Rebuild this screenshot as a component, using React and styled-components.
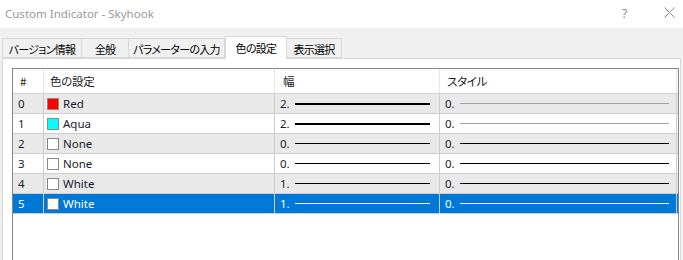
import styled, { createGlobalStyle } from 'styled-components';

const rows = [
    { id: 0, name: 'Red', swatch: '#ff0000', width: '2.', thick: 2, style: '0.', styleColor: '#a0a0a0' },
    { id: 1, name: 'Aqua', swatch: '#00ffff', width: '2.', thick: 2, style: '0.', styleColor: '#a0a0a0' },
    { id: 2, name: 'None', swatch: '#ffffff', width: '0.', thick: 1, style: '0.', styleColor: '#000000' },
    { id: 3, name: 'None', swatch: '#ffffff', width: '0.', thick: 1, style: '0.', styleColor: '#000000' },
    { id: 4, name: 'White', swatch: '#ffffff', width: '1.', thick: 1, style: '0.', styleColor: '#000000' },
    { id: 5, name: 'White', swatch: '#ffffff', width: '1.', thick: 1, style: '0.', styleColor: '#000000', selected: true },
];

const tabs = [
    { label: 'バージョン情報', width: 80 },
    { label: '全般', width: 47 },
    { label: 'パラメーターの入力', width: 96 },
    { label: '色の設定', width: 62, active: true },
    { label: '表示選択', width: 55 },
];

const columns = '31px 231px 165px 237px';

function App(){
    return(
        <Window>
            <GlobalStyle />
            <TitleBar>
                <Title>Custom Indicator - Skyhook</Title>
                <HelpButton>?</HelpButton>
                <CloseButton>
                    <svg width="11" height="11" viewBox="0 0 11 11">
                        <path d="M0.5 0.5 L10.5 10.5 M10.5 0.5 L0.5 10.5" stroke="#8c8c8c" strokeWidth="1" fill="none" />
                    </svg>
                </CloseButton>
            </TitleBar>
            <Body>
                <TabStrip>
                    {tabs.map(tab => (
                        <Tab key={tab.label} $width={tab.width} $active={tab.active}>{tab.label}</Tab>
                    ))}
                </TabStrip>
                <Panel>
                    <ListBox>
                        <HeaderRow>
                            <HeaderCell $pad={7}>#</HeaderCell>
                            <HeaderCell $pad={6}>色の設定</HeaderCell>
                            <HeaderCell $pad={8}>幅</HeaderCell>
                            <HeaderCell $pad={7}>スタイル</HeaderCell>
                        </HeaderRow>
                        {rows.map((row, i) => (
                            <Row key={row.id} $alt={i % 2 === 0} $selected={row.selected}>
                                <Cell $pad={5}>{row.id}</Cell>
                                <Cell $pad={3}>
                                    <Swatch $color={row.swatch} />
                                    <ColorName>{row.name}</ColorName>
                                </Cell>
                                <Cell $pad={5} $right={9}>
                                    {row.width}
                                    <Line $thick={row.thick} $color={row.selected ? '#ffffff' : '#000000'} />
                                </Cell>
                                <Cell $pad={5} $right={7}>
                                    {row.style}
                                    <Line $thick={1} $color={row.selected ? '#ffffff' : row.styleColor} />
                                </Cell>
                            </Row>
                        ))}
                    </ListBox>
                </Panel>
            </Body>
        </Window>
    )
}

const GlobalStyle = createGlobalStyle`
    html, body {
        margin: 0;
        padding: 0;
        overflow: hidden;
        background: #f0f0f0;
    }
    body {
        font-family: "Noto Sans", "Noto Sans CJK JP", sans-serif;
        font-size: 11px;
    }
`;

const Window = styled.div`
    display: flex;
    flex-direction: column;
    width: 683px;
    height: 260px;
    overflow: hidden;
    background: #f0f0f0;
`;

const TitleBar = styled.div`
    display: flex;
    align-items: center;
    height: 28px;
    background: #ffffff;
    padding-left: 5px;
    box-sizing: border-box;
`;

const Title = styled.span`
    flex: 1;
    color: #999999;
    font-size: 11.5px;
    margin-top: -2px;
`;

const HelpButton = styled.span`
    color: #8c8c8c;
    font-size: 12px;
    width: 10px;
    margin-right: 32px;
    margin-top: -2px;
`;

const CloseButton = styled.span`
    display: flex;
    width: 11px;
    margin-right: 8px;
    margin-top: -3px;
`;

const Body = styled.div`
    display: flex;
    flex-direction: column;
    flex: 1;
    padding: 8px 2px 0 2px;
`;

const TabStrip = styled.div`
    display: flex;
    align-items: flex-end;
    height: 22px;
    position: relative;
    z-index: 1;
`;

const Tab = styled.div`
    box-sizing: border-box;
    width: ${p => p.$width}px;
    height: ${p => p.$active ? 23 : 20}px;
    margin-bottom: ${p => p.$active ? -1 : 0}px;
    display: flex;
    align-items: center;
    justify-content: center;
    background: ${p => p.$active ? '#ffffff' : '#f0f0f0'};
    border: 1px solid #d9d9d9;
    border-bottom: ${p => p.$active ? 'none' : '1px solid #d9d9d9'};
    border-left: ${p => p.$active ? '1px solid #d9d9d9' : 'none'};
    &:first-child {
        border-left: 1px solid #d9d9d9;
    }
    color: #000000;
    font-family: "Noto Sans CJK JP", sans-serif;
    font-feature-settings: "palt";
    font-size: 11px;
    letter-spacing: -0.7px;
    white-space: nowrap;
    padding-top: ${p => p.$active ? 0 : 1}px;
`;

const Panel = styled.div`
    flex: 1;
    background: #ffffff;
    border: 1px solid #d9d9d9;
    border-bottom: none;
    padding: 9px 1px 0 9px;
`;

const ListBox = styled.div`
    border: 1px solid #828790;
    border-bottom: none;
    height: 100%;
    box-sizing: border-box;
    background: #ffffff;
`;

const HeaderRow = styled.div`
    display: grid;
    grid-template-columns: ${columns};
    height: 25px;
    border-bottom: 1px solid #d5d5d5;
    box-sizing: border-box;
`;

const HeaderCell = styled.div`
    display: flex;
    align-items: center;
    padding-left: ${p => p.$pad}px;
    border-right: 1px solid #e5e5e5;
    color: #1a1a1a;
    font-family: "Noto Sans CJK JP", sans-serif;
    font-feature-settings: "palt";
    font-size: 11.5px;
    letter-spacing: -0.3px;
`;

const Row = styled.div`
    display: grid;
    grid-template-columns: ${columns};
    height: 20px;
    box-sizing: border-box;
    border-bottom: 1px solid #cdcdcd;
    background: ${p => p.$selected ? '#0078d7' : p.$alt ? '#e9e9e9' : '#ffffff'};
    color: ${p => p.$selected ? '#ffffff' : '#1a1a2a'};
`;

const Cell = styled.div`
    display: flex;
    align-items: center;
    padding-left: ${p => p.$pad}px;
    padding-right: ${p => p.$right || 0}px;
    border-right: 1px solid #cdcdcd;
    font-size: 11.5px;
    white-space: nowrap;
    overflow: hidden;
`;

const Swatch = styled.span`
    width: 12px;
    height: 12px;
    box-sizing: border-box;
    background: ${p => p.$color};
    border: 1px solid #8a8a8a;
    flex-shrink: 0;
`;

const ColorName = styled.span`
    margin-left: 4px;
`;

const Line = styled.span`
    flex: 1;
    height: ${p => p.$thick}px;
    background: ${p => p.$color};
    margin-left: 5px;
`;

export default App
